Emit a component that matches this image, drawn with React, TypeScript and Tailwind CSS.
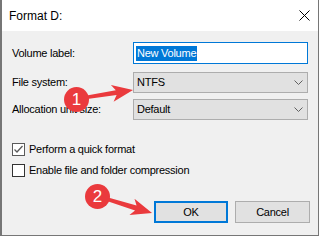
import { ReactNode } from 'react';

function Chevron() {
  return (
    <svg width="9" height="5" viewBox="0 0 9 5" fill="none">
      <polyline points="0.5,0.5 4.5,4.5 8.5,0.5" stroke="#606060" strokeWidth="1" />
    </svg>
  );
}

function Combo({ value }: { value: string }) {
  return (
    <div className="w-[175px] h-[21px] border border-[#adadad] bg-[#e1e1e1] flex items-center justify-between pl-[3px] pr-[4px]">
      <span>{value}</span>
      <Chevron />
    </div>
  );
}

function Row({ label, children, className = '' }: { label: string; children: ReactNode; className?: string }) {
  return (
    <div className={`flex items-center ${className}`}>
      <div className="w-[121px]">{label}</div>
      {children}
    </div>
  );
}

function Checkbox({ checked, label, border }: { checked: boolean; label: string; border: string }) {
  return (
    <div className="h-[21px] flex items-center gap-[4px]">
      <div className={`w-[13px] h-[13px] border bg-white flex items-center justify-center ${border}`}>
        {checked && (
          <svg width="11" height="11" viewBox="0 0 11 11" fill="none">
            <polyline points="1.5,5.5 4,8 9.5,2" stroke="#5a5a5a" strokeWidth="1.3" />
          </svg>
        )}
      </div>
      <span>{label}</span>
    </div>
  );
}

// annotation arrow drawn along the x axis, then rotated into place
function Arrow({ x, y, angle, length }: { x: number; y: number; angle: number; length: number }) {
  const L = length;
  const pts = [
    [0, -1.5],
    [L - 17, -2.5],
    [L - 21, -8.5],
    [L, 0],
    [L - 21, 8.5],
    [L - 17, 2.5],
    [0, 1.5],
  ]
    .map((p) => p.join(','))
    .join(' ');
  return <polygon points={pts} fill="#ea3a3d" transform={`translate(${x} ${y}) rotate(${angle})`} />;
}

export default function App() {
  return (
    <div className="relative w-[320px] h-[237px] bg-white text-black text-[11px] tracking-[-0.25px] font-['Liberation_Sans',Arial,sans-serif]">
      <div className="w-[319px] h-[236px] flex flex-col border-l-2 border-r border-b border-[#767676]">
        {/* title bar */}
        <div className="h-[31px] bg-white flex items-center justify-between pl-[7px] pr-[8px]">
          <span className="text-[12px] tracking-normal">Format D:</span>
          <svg width="11" height="11" viewBox="0 0 11 11" fill="none">
            <path d="M0.5 0.5L10.5 10.5M10.5 0.5L0.5 10.5" stroke="#000" strokeWidth="1" />
          </svg>
        </div>

        {/* body */}
        <div className="flex-1 bg-[#f0f0f0] pt-[11px] pl-[10px] flex flex-col">
          <Row label="Volume label:">
            <div className="w-[175px] h-[22px] border border-[#0078d7] bg-white pl-[2px] flex items-center">
              <span className="bg-[#0078d7] text-white px-[1px] leading-[15px]">New Volume</span>
            </div>
          </Row>
          <Row label="File system:" className="mt-[8px]">
            <Combo value="NTFS" />
          </Row>
          <Row label="Allocation unit size:" className="mt-[6px]">
            <Combo value="Default" />
          </Row>

          <div className="mt-[19px] flex flex-col">
            <Checkbox checked label="Perform a quick format" border="border-[#5a5a5a]" />
            <Checkbox checked={false} label="Enable file and folder compression" border="border-[#333333]" />
          </div>

          <div className="mt-[20px] ml-[142px] flex gap-[7px]">
            <button className="w-[74px] h-[22px] border-2 border-[#0078d7] bg-[#e1e1e1] flex items-center justify-center">
              OK
            </button>
            <button className="w-[75px] h-[22px] border border-[#adadad] bg-[#e1e1e1] flex items-center justify-center">
              Cancel
            </button>
          </div>
        </div>
      </div>

      {/* annotations */}
      <svg className="absolute inset-0 pointer-events-none" width="320" height="237">
        <Arrow x={76} y={99} angle={-8.97} length={57.7} />
        <Arrow x={97} y={196} angle={17.2} length={57.6} />
      </svg>
      <div className="absolute left-[64px] top-[87px] w-[25px] h-[25px] rounded-full bg-[#ea3a3d] text-white text-[17px] tracking-normal flex items-center justify-center">
        1
      </div>
      <div className="absolute left-[85px] top-[184px] w-[25px] h-[25px] rounded-full bg-[#ea3a3d] text-white text-[17px] tracking-normal flex items-center justify-center">
        2
      </div>
    </div>
  );
}
